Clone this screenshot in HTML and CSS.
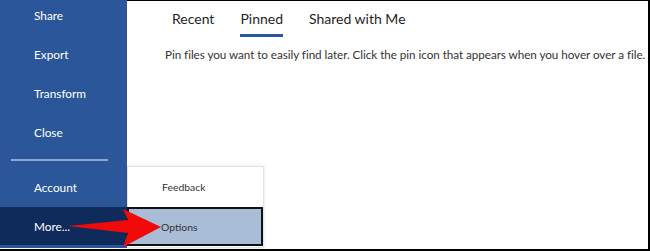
FILE: index.html
```html
<!DOCTYPE html>
<html>
<head>
<meta charset="utf-8">
<link rel="stylesheet" href="styles.css">
</head>
<body>
<div class="frame">
  <nav class="sidebar">
    <ul class="menu">
      <li class="item">Share</li>
      <li class="item">Export</li>
      <li class="item">Transform</li>
      <li class="item">Close</li>
    </ul>
    <div class="sep"></div>
    <ul class="menu">
      <li class="item">Account</li>
      <li class="item active">More...</li>
    </ul>
  </nav>
  <main class="main">
    <div class="tabs">
      <span class="tab">Recent</span>
      <span class="tab selected">Pinned</span>
      <span class="tab">Shared with Me</span>
    </div>
    <p class="desc">Pin files you want to easily find later. Click the pin icon that appears when you hover over a file.</p>
  </main>
  <div class="popup">
    <div class="pop-item">Feedback</div>
    <div class="pop-item hover">Options</div>
  </div>
  <svg class="arrow" width="650" height="251" viewBox="0 0 650 251">
    <polygon points="68,226 128,220 123,209 161,227 123,247 128,233" fill="#f00a0a"/>
  </svg>
</div>
</body>
</html>
```

FILE: styles.css
```css
* { box-sizing: border-box; }
html, body { margin: 0; padding: 0; background: #fff; }
body { width: 650px; height: 251px; overflow: hidden; font-family: Lato, "Noto Sans", sans-serif; }
.frame {
  position: relative;
  display: flex;
  width: 650px;
  height: 251px;
  border-right: 2px solid #000;
  border-bottom: 2px solid #000;
  padding-bottom: 1px;
}
.sidebar {
  width: 127px;
  flex: none;
  background: #2b579a;
  display: flex;
  flex-direction: column;
}
.menu { list-style: none; margin: 0; padding: 0; }
.menu:first-child { margin-top: -4px; }
.item {
  height: 39px;
  display: flex;
  align-items: center;
  padding-left: 34px;
  color: #fff;
  font-size: 11.8px;
}
.item.active { background: #0f2b5b; height: 38px; }
.sep {
  height: 16px;
  display: flex;
  align-items: center;
  padding: 0 19px 0 11px;
}
.sep::before { content: ""; display: block; width: 100%; height: 2px; background: #8fa7cf; }
.main {
  flex: 1;
  border-top: 1px solid #000;
  padding-left: 38px;
}
.tabs {
  display: flex;
  gap: 26px;
  padding-left: 7px;
  margin-top: 6px;
}
.tab {
  font-size: 14px;
  color: #1f1f1f;
  line-height: 24px;
  padding-bottom: 3px;
  border-bottom: 3px solid transparent;
}
.tab.selected { border-bottom-color: #2b579a; }
.desc {
  margin: 10px 0 0;
  font-size: 11.7px;
  letter-spacing: -0.05px;
  color: #333;
  white-space: nowrap;
}
.popup {
  position: absolute;
  left: 127px;
  top: 166px;
  width: 137px;
  height: 82px;
  background: #fff;
  border: 1px solid #e3e3e3;
  box-shadow: 0 0 3px rgba(0,0,0,0.12);
}
.pop-item {
  height: 40px;
  display: flex;
  align-items: center;
  padding-left: 34px;
  font-size: 10.4px;
  color: #333;
}
.pop-item.hover {
  height: 39px;
  margin-left: -1px;
  width: 136px;
  background: #a9bdd6;
  border: 2px solid #111;
  padding-left: 32px;
}
.arrow { position: absolute; left: 0; top: 0; pointer-events: none; }
```
